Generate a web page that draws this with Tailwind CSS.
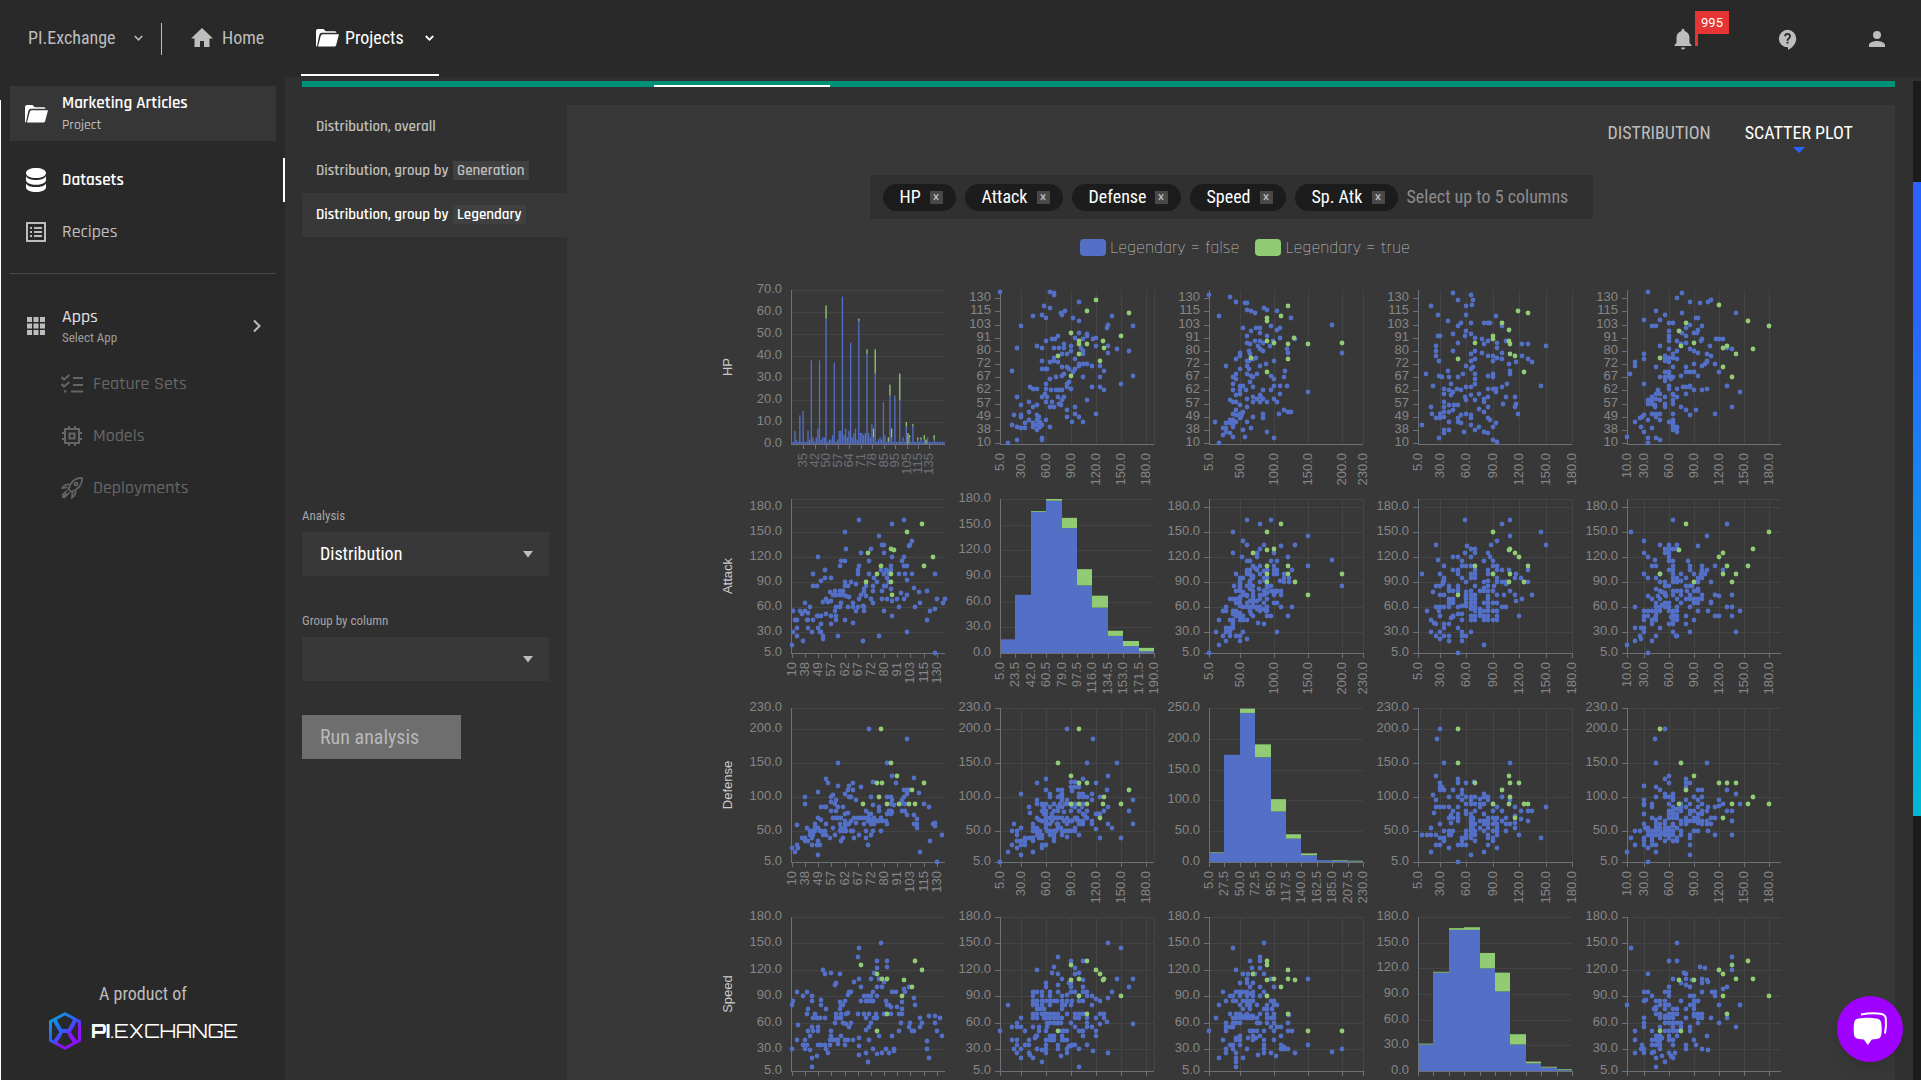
<!doctype html>
<html lang="en">

<head>
    <meta charset="utf-8">
    <meta name="viewport" content="width=device-width, initial-scale=1">
    <script src="https://cdn.jsdelivr.net/npm/@tailwindcss/browser@4"></script>
    <title>PI.Exchange - Marketing Articles</title>
</head>

<body class="bg-[#292929] text-[#bdbdbd] font-['Roboto_Condensed','Liberation_Sans_Narrow',Roboto,sans-serif] h-screen flex overflow-hidden">
    <div class="w-px shrink-0 pt-[100px]">
        <div class="h-full bg-white"></div>
    </div>

    <div class="flex-1 min-w-0 flex flex-col">
        <!-- Top bar -->
        <header class="h-[77px] shrink-0 flex items-stretch pl-[27px] text-lg">
            <button class="flex items-center gap-5 pb-px">
                <span class="w-[86px] text-left">PI.Exchange</span>
                <svg class="w-[9px] h-2" viewBox="0 0 9 8" fill="none" stroke="currentColor" stroke-width="1.6"><path d="M.8 2l3.7 3.8L8.2 2" /></svg>
            </button>
            <span class="w-px h-8 my-auto ml-[18px] bg-[#bdbdbd]"></span>
            <a href="#" class="flex items-center gap-2 ml-7 pb-px">
                <svg class="w-6 h-6" viewBox="0 0 24 24" fill="currentColor"><path d="M10 21v-6h4v6h5.500v-8.500H23L12 2 1 12.500h3.500V21z" /></svg>
                <span class="w-[42px]">Home</span>
            </a>
            <a href="#" class="flex items-center gap-[6px] ml-[37px] w-[138px] pl-[14px] pt-[2px] mb-px border-b-2 border-white text-white">
                <svg class="w-6 h-6 shrink-0" viewBox="0 0 24 24" fill="currentColor"><path d="M2 20.500a1 1 0 0 1-1-1V5a2 2 0 0 1 2-2h5.500l2.200 2.200H20a1.500 1.500 0 0 1 1.500 1.600H7a3 3 0 0 0-2.700 2.100L2.300 18.500zM5.800 9.800A2 2 0 0 1 7.700 8.300H24l-2.900 10.900a1.800 1.800 0 0 1-1.700 1.300H3z" /></svg>
                <span class="w-[60px]">Projects</span>
                <svg class="w-[9px] h-2 ml-[14px] shrink-0" viewBox="0 0 9 8" fill="none" stroke="currentColor" stroke-width="1.8"><path d="M.8 2l3.700 3.800L8.200 2" /></svg>
            </a>
            <div class="ml-auto flex items-center pr-8 gap-[66px]">
                <button class="relative" aria-label="Notifications">
                    <svg class="w-6 h-6" viewBox="0 0 24 24" fill="currentColor"><path d="M12 22.500a2 2 0 0 0 2-2h-4a2 2 0 0 0 2 2zM18.500 16v-5.500c0-3.200-1.900-5.800-5-6.600V3.200a1.500 1.500 0 0 0-3 0v.7c-3.100.8-5 3.400-5 6.600V16l-2 2v1h17v-1z" /></svg>
                    <span class="absolute left-6 -top-4 w-[34px] h-[23px] bg-[#e53535] text-white text-[13px] leading-[23px] text-center font-['Roboto',sans-serif]">995</span>
                    <span class="absolute left-6 top-1 w-[3px] h-[15px] bg-[#e53535]"></span>
                </button>
                <button class="ml-4" aria-label="Help">
                    <svg class="w-[22px] h-[22px]" viewBox="0 0 24 24" fill="currentColor"><path d="M11.500 2a9.500 9.500 0 0 0 0 19h.5v3c4.900-2.300 9-7.200 9-12.500A9.500 9.500 0 0 0 11.500 2zm1 15h-2v-2h2zm.4-4.200c-.3.300-.4.600-.4 1.200h-2c0-1.600.6-2.300 1.300-2.900.8-.7 1.400-1.100 1.400-2a1.700 1.700 0 0 0-3.400 0h-2a3.700 3.700 0 0 1 7.400 0c0 1.800-1.400 2.600-2.300 3.700z" /></svg>
                </button>
                <button aria-label="Account">
                    <svg class="w-6 h-6" viewBox="0 0 24 24" fill="currentColor"><path d="M12 12a4 4 0 1 0 0-8 4 4 0 0 0 0 8zm0 2c-2.700 0-8 1.300-8 4v2h16v-2c0-2.700-5.300-4-8-4z" /></svg>
                </button>
            </div>
        </header>

        <div class="flex-1 min-h-0 flex">
            <!-- Sidebar -->
            <aside class="w-[284px] shrink-0 flex flex-col pt-[9px] font-['Rajdhani',Roboto,sans-serif] text-lg">
                <a href="#" class="mx-[9px] h-[55px] flex items-center gap-[14px] pl-[14px] bg-[#363636]">
                    <svg class="w-6 h-6 text-white" viewBox="0 0 24 24" fill="currentColor"><path d="M2 20.500a1 1 0 0 1-1-1V5a2 2 0 0 1 2-2h5.500l2.200 2.200H20a1.500 1.500 0 0 1 1.500 1.600H7a3 3 0 0 0-2.700 2.100L2.300 18.500zM5.800 9.800A2 2 0 0 1 7.700 8.300H24l-2.900 10.900a1.800 1.800 0 0 1-1.700 1.300H3z" /></svg>
                    <span class="pb-[2px]">
                        <span class="block text-[17px] leading-6 font-semibold text-white">Marketing Articles</span>
                        <span class="block text-sm leading-5 font-medium">Project</span>
                    </span>
                </a>
                <nav class="pt-[17px]">
                    <a href="#" class="h-11 flex items-center gap-[14px] pl-[23px] border-r-2 border-white text-[17px] font-semibold text-white">
                        <svg class="w-6 h-6" viewBox="0 0 24 24" fill="currentColor"><path d="M12 0C6.500 0 2 2 2 5s4.500 5 10 5 10-2 10-5-4.500-5-10-5zM2 8v4c0 2.800 4.500 4.800 10 4.800s10-2 10-4.800V8c-1.200 2.600-5 4-10 4S3.200 10.600 2 8zm0 7.400v3.800C2 22 6.500 24 12 24s10-2 10-4.800v-3.800c-1.200 2.400-5 3.600-10 3.600S3.200 17.800 2 15.400z" /></svg>
                        Datasets
                    </a>
                    <a href="#" class="h-11 mt-2 flex items-center gap-[14px] pl-[23px] font-medium">
                        <svg class="w-6 h-6" viewBox="0 0 24 24" fill="none" stroke="currentColor" stroke-width="2"><path d="M3 3h18v18H3zM6 8h2m-2 4h2m-2 4h2m2-8h8m-8 4h8m-8 4h8" /></svg>
                        Recipes
                    </a>
                </nav>
                <hr class="mx-[9px] mt-[19px] border-[#484848]">
                <button class="mt-[31px] flex items-center gap-[14px] pl-[23px] pr-[22px] text-left">
                    <svg class="w-6 h-6" viewBox="0 0 24 24" fill="currentColor"><path d="M3 3h5v5H3zm6.500 0h5v5h-5zM16 3h5v5h-5zM3 9.500h5v5H3zm6.500 0h5v5h-5zm6.500 0h5v5h-5zM3 16h5v5H3zm6.500 0h5v5h-5zm6.500 0h5v5h-5z" /></svg>
                    <span>
                        <span class="block leading-6 font-medium text-[#e0e0e0]">Apps</span>
                        <span class="block text-[13px] leading-[18px] text-[#9e9e9e] font-['Roboto_Condensed','Liberation_Sans_Narrow',Roboto,sans-serif]">Select App</span>
                    </span>
                    <svg class="w-3 h-4 ml-auto" viewBox="0 0 12 16" fill="none" stroke="currentColor" stroke-width="2"><path d="M3 2.500L8.500 8 3 13.500" /></svg>
                </button>
                <div class="mt-[11px] pl-[60px] text-[#666] font-medium">
                    <a href="#" class="h-[52px] flex items-center gap-[10px]">
                        <svg class="w-[22px] h-[22px]" viewBox="0 0 22 22" fill="none" stroke="currentColor" stroke-width="2"><path d="M.5 4l2.500 2.500L8.500 2M.5 11L3 13.500 8.500 9M12 5h10m-10 7h10m-12 6.500h12M3 18.500h2.500" /></svg>
                        Feature Sets
                    </a>
                    <a href="#" class="h-[52px] flex items-center gap-[10px]">
                        <svg class="w-[22px] h-[22px]" viewBox="0 0 22 22" fill="none" stroke="currentColor" stroke-width="2"><path d="M4 4h14v14H4zM8.500 8.500h5v5h-5zM8 1v3m6-3v3M8 18v3m6-3v3M1 8h3m-3 6h3M18 8h3m-3 6h3" /></svg>
                        Models
                    </a>
                    <a href="#" class="h-[52px] flex items-center gap-[10px]">
                        <svg class="w-[22px] h-[22px]" viewBox="0 0 22 22" fill="none" stroke="currentColor" stroke-width="1.700"><path d="M21 1c-6-.5-11 3.500-13.500 11l3 3C17.500 12 21.500 7 21 1zM8 7L3.500 8.500 1.500 11l5-.5M15 14l-1.500 4.500-2.500 2 .5-5M6 13.500l-5 5M8.500 15.500l-5.500 5.500M5.500 16.500L1 21" /><circle cx="15" cy="7" r="1.500" /></svg>
                        Deployments
                    </a>
                </div>
                <div class="mt-auto pb-[30px] text-center">
                    <p class="leading-6 font-['Roboto_Condensed','Liberation_Sans_Narrow',Roboto,sans-serif]">A product of</p>
                    <div class="mt-[6px] flex justify-center items-center gap-[9px]">
                        <svg class="w-[34px] h-[38px]" viewBox="0 0 34 38" fill="none">
                            <defs>
                                <linearGradient id="brand" x1="0" y1="0" x2="34" y2="38" gradientUnits="userSpaceOnUse">
                                    <stop offset="0" stop-color="#00b4c8" />
                                    <stop offset=".45" stop-color="#2962ff" />
                                    <stop offset=".65" stop-color="#9012ff" />
                                    <stop offset="1" stop-color="#8a10ff" />
                                </linearGradient>
                            </defs>
                            <path d="M17 1.800L31.500 9.500v19L17 36.200 2.500 28.500v-19z" stroke="url(#brand)" stroke-width="3" stroke-linejoin="round" />
                            <path d="M7 8c2 6 5 9 6 11s-3 6-6 11M27 8c-2 6-5 9-6 11s3 6 6 11M13 19h8" stroke="url(#brand)" stroke-width="4" />
                        </svg>
                        <span class="text-[19px] leading-6 font-normal text-white font-['Orbitron','Inter',sans-serif]"><b class="font-extrabold">PI</b>.EXCHANGE</span>
                    </div>
                </div>
            </aside>

            <main class="flex-1 min-w-0 bg-[#303030] flex pt-1">
                <div class="flex-1 min-w-0 ml-[17px] mr-[18px] flex flex-col">
                    <div class="h-[6px] shrink-0 bg-[#009078] flex items-end pl-[352px]">
                        <span class="w-44 h-0.5 bg-white"></span>
                    </div>
                    <div class="mt-[18px] flex-1 min-h-0 flex">
                        <!-- Analysis list -->
                        <section class="w-[265px] shrink-0 flex flex-col font-['Rajdhani',Roboto,sans-serif] text-[15px] font-semibold">
                            <button class="h-11 px-[14px] text-left">Distribution, overall</button>
                            <button class="h-11 px-[14px] text-left">Distribution, group by <span class="ml-px px-1 bg-[#404040]">Generation</span></button>
                            <button class="h-11 px-[14px] text-left bg-[#383838] text-white">Distribution, group by <span class="ml-px px-1 bg-[#404040]">Legendary</span></button>

                            <form class="mt-[269px] w-[247px] font-['Roboto_Condensed','Liberation_Sans_Narrow',Roboto,sans-serif] font-normal">
                                <label for="analysis" class="block text-[13px] leading-5 text-[#a5a5a5]">Analysis</label>
                                <div class="relative mt-[6px]">
                                    <select id="analysis" class="appearance-none w-full h-11 pl-[18px] bg-[#383838] text-white text-lg">
                                        <option>Distribution</option>
                                    </select>
                                    <svg class="absolute right-4 top-[18px] w-[10px] h-2" viewBox="0 0 10 8" fill="#bdbdbd"><path d="M0 1h10L5 7.500z" /></svg>
                                </div>
                                <label for="group" class="block mt-[35px] text-[13px] leading-5 text-[#a5a5a5]">Group by column</label>
                                <div class="relative mt-[6px]">
                                    <select id="group" class="appearance-none w-full h-11 pl-[18px] bg-[#383838] text-white text-lg">
                                        <option></option>
                                    </select>
                                    <svg class="absolute right-4 top-[18px] w-[10px] h-2" viewBox="0 0 10 8" fill="#bdbdbd"><path d="M0 1h10L5 7.500z" /></svg>
                                </div>
                                <button type="button" class="mt-[34px] w-[159px] h-11 pl-[18px] text-left text-xl bg-[#6e6e6e] text-[#b8b8b8]">Run analysis</button>
                            </form>
                        </section>

                        <!-- Scatter matrix -->
                        <section class="flex-1 min-w-0 bg-[#383838] flex flex-col overflow-hidden">
                            <div class="flex justify-end gap-[34px] pt-4 pr-[42px] text-lg leading-6 shrink-0">
                                <button>DISTRIBUTION</button>
                                <button class="relative text-white">SCATTER PLOT
                                    <svg class="absolute left-1/2 -translate-x-1/2 top-[26px] w-3 h-[6px]" viewBox="0 0 12 6" fill="#2962ff"><path d="M0 0h12L6 6z" /></svg>
                                </button>
                            </div>
                            <div class="mt-[30px] mx-auto w-[723px] h-11 shrink-0 flex items-center gap-[9px] pl-[13px] bg-[#303030] text-lg text-white">
                                <span class="h-[27px] pl-[17px] pr-[13px] flex items-center justify-between w-[73px] rounded-full bg-[#1c1c1c]">HP <button aria-label="Remove HP" class="w-[13px] h-[13px] bg-[#484848] text-[#bdbdbd] text-sm leading-[13px]">×</button></span>
                                <span class="h-[27px] pl-[17px] pr-[13px] flex items-center justify-between w-[98px] rounded-full bg-[#1c1c1c]">Attack <button aria-label="Remove Attack" class="w-[13px] h-[13px] bg-[#484848] text-[#bdbdbd] text-sm leading-[13px]">×</button></span>
                                <span class="h-[27px] pl-[17px] pr-[13px] flex items-center justify-between w-[109px] rounded-full bg-[#1c1c1c]">Defense <button aria-label="Remove Defense" class="w-[13px] h-[13px] bg-[#484848] text-[#bdbdbd] text-sm leading-[13px]">×</button></span>
                                <span class="h-[27px] pl-[17px] pr-[13px] flex items-center justify-between w-24 rounded-full bg-[#1c1c1c]">Speed <button aria-label="Remove Speed" class="w-[13px] h-[13px] bg-[#484848] text-[#bdbdbd] text-sm leading-[13px]">×</button></span>
                                <span class="h-[27px] pl-[17px] pr-[13px] flex items-center justify-between w-[103px] rounded-full bg-[#1c1c1c]">Sp. Atk <button aria-label="Remove Sp. Atk" class="w-[13px] h-[13px] bg-[#484848] text-[#bdbdbd] text-sm leading-[13px]">×</button></span>
                                <input type="text" aria-label="Columns" placeholder="Select up to 5 columns" class="flex-1 min-w-0 bg-transparent outline-none placeholder:text-[#8c8c8c]">
                            </div>
                            <div class="mt-[17px] pl-7 h-[23px] shrink-0 flex justify-center items-center text-lg font-light font-['Rajdhani',Roboto,sans-serif]">
                                <span class="w-[26px] h-[17px] mr-1 rounded bg-[#5470c6]"></span>Legendary = false
                                <span class="w-[26px] h-[17px] ml-4 mr-1 rounded bg-[#91cc75]"></span>Legendary = true
                            </div>
                            <svg id="matrix" class="mt-[11px] mx-auto w-[1100px] h-[810px] shrink-0 font-['Liberation_Sans',sans-serif] text-[13px]"></svg>
                        </section>
                    </div>
                </div>
                <div class="w-2 shrink-0 bg-[#1b1b1b] pt-[101px]">
                    <div class="h-[634px] bg-linear-to-b from-[#2962ff] from-20% to-[#00b8d4]"></div>
                </div>
            </main>
        </div>
    </div>

    <button aria-label="Open chat" class="fixed right-[18px] bottom-[18px] w-[66px] h-[66px] rounded-full bg-[#a000ff] shadow-lg flex items-center justify-center">
        <svg class="w-9 h-9" viewBox="0 0 36 36" fill="none"><path d="M9 3.500c8-1.500 15-1.500 20.500-.5 3 .6 4 2 4.300 4.500.5 5 .2 10-.8 15" stroke="#fff" stroke-width="2" /><path d="M6.500 7.500c6-1 12-1 18 0 3 .5 4.500 2 4.800 5 .5 4 .5 8 0 11-.3 2.800-1.800 4.300-4.500 4.500l-5 .5-4 5.500-4-5.500-5-.5c-3-.2-4.500-2-4.800-4.500-.5-4-.5-7 0-11 .3-3 1.500-4.500 4.500-5z" fill="#fff" /></svg>
    </button>

    <script>
        const SIZE = 154;
        const PITCH = 209;
        const LEFT = 110;
        const TOP = 20;
        const ROWS = 4;
        const BLUE = '#5470c6';
        const GREEN = '#91cc75';

        const hpLabels = ['10', '38', '49', '57', '62', '67', '72', '80', '91', '103', '115', '130'];

        // HP is a category axis: its values are ranks, one label every 8 ranks
        const columns = [
            { name: 'HP', min: -0.5, max: 93, ticks: hpLabels.map((_, i) => i * 8), labels: hpLabels },
            { name: 'Attack', min: 5, max: 190, ticks: [5, 30, 60, 90, 120, 150, 180], end: true },
            { name: 'Defense', min: 5, max: 230, ticks: [5, 50, 100, 150, 200, 230] },
            { name: 'Speed', min: 5, max: 180, ticks: [5, 30, 60, 90, 120, 150, 180] },
            { name: 'Sp. Atk', min: 10, max: 194, ticks: [10, 30, 60, 90, 120, 150, 180] },
        ];

        const histograms = [
            null,
            { max: 180, step: 30, from: 5, width: 18.5, blue: [16, 68, 165, 178, 146, 79, 53, 20, 8, 2], green: [0, 0, 1, 2, 12, 19, 14, 6, 6, 4] },
            { max: 250, step: 50, from: 5, width: 22.5, blue: [15, 174, 242, 170, 82, 38, 11, 3, 2, 1], green: [1, 0, 7, 21, 20, 7, 3, 0, 1, 1] },
            { max: 180, step: 30, from: 5, width: 17.5, blue: [31, 115, 165, 165, 120, 93, 31, 9, 4, 1], green: [1, 1, 2, 3, 18, 22, 12, 2, 1, 1] },
        ];

        // rank: [false count, true count]; every other rank has a single row
        const hpCounts = {
            2: [6, 0], 3: [2, 0], 5: [13, 0], 7: [15, 0], 10: [6, 0], 11: [2, 0], 12: [38, 0], 13: [3, 0], 15: [3, 0], 16: [7, 0], 17: [38, 0],
            18: [2, 0], 19: [3, 0], 20: [3, 0], 21: [57, 6], 23: [2, 0], 24: [2, 0], 25: [4, 0], 26: [37, 0], 28: [2, 0], 29: [6, 0], 30: [6, 0],
            31: [67, 0], 32: [4, 0], 33: [7, 0], 34: [3, 0], 35: [6, 0], 36: [46, 0], 37: [3, 0], 38: [5, 0], 39: [7, 0], 40: [2, 0], 41: [56, 1],
            42: [5, 0], 43: [5, 0], 44: [4, 0], 45: [5, 0], 46: [41, 2], 47: [5, 0], 48: [3, 0], 49: [9, 0], 50: [3, 4], 51: [32, 11], 53: [2, 0],
            54: [3, 0], 55: [2, 0], 56: [19, 0], 57: [4, 0], 59: [1, 2], 60: [22, 5], 61: [3, 4], 63: [22, 0], 66: [20, 12], 68: [3, 0], 70: [8, 2],
            71: [0, 5], 72: [3, 1], 74: [8, 1], 77: [2, 1], 79: [2, 1], 81: [2, 2], 82: [0, 2], 83: [3, 0], 87: [2, 2],
        };

        // key: row and column of the plot. Above the diagonal a pair is y,x, below it x,y; [false, true]
        const samples = {
            '01': ['92,5 92,65 91,70 90,70 86,100 83,58 82,65 79,78 80,83 78,80 77,45 78,55 76,60 76,93 74,100 77,140 72,135 70,134 71,30 71,165 67,100 66,110 65,110 64,95 63,105 64,120 63,117 65,75 63,68 63,71 62,60 60,82 59,50 58,56 58,25 58,70 58,76 58,82 59,90 56,90 58,102 56,105 54,105 59,120 59,135 55,135 57,145 56,160 54,85 54,80 52,70 51,95 50,55 49,65 50,70 49,75 48,100 48,105 48,110 47,115 47,100 47,125 46,80 46,85 45,88 45,95 43,93 44,130 44,20 45,55 45,60 45,62 39,65 40,72 41,80 42,82 40,105 40,125 41,165 36,150 34,115 34,125 32,130 36,60 33,60 32,66 32,72 32,76 32,80 34,85 36,85 37,88 33,90 34,41 33,45 33,50 28,25 25,40 28,55 30,59 28,62 25,60 22,65 22,70 25,67 28,75 28,82 26,80 24,76 23,78 26,110 22,95 20,85 16,85 18,95 16,100 13,92 13,105 18,120 23,30 22,45 23,50 19,40 17,22 17,30 16,30 14,40 12,35 17,50 16,52 14,50 13,53 11,20 10,25 9,30 9,35 12,45 10,45 11,50 8,50 11,55 10,53 14,60 10,65 3,55 2,55 2,25 0,15',
                '87,120 80,110 79,160 65,150 67,90 62,100 60,100 60,110 62,129 58,130 53,75 54,100 50,125 41,90'],
            '02': ['90,5 89,35 86,45 85,60 85,58 82,85 81,90 81,60 80,67 79,72 80,105 76,125 77,20 72,184 70,54 70,74 70,79 71,95 69,105 70,109 68,66 67,79 65,60 65,90 64,109 63,130 62,72 61,60 60,65 62,79 61,84 59,76 59,94 62,99 57,119 55,121 55,200 56,84 57,79 56,64 55,50 53,50 51,45 47,30 54,65 51,70 52,74 50,60 50,64 47,60 45,50 45,64 47,79 48,88 50,100 42,75 40,70 41,67 37,65 42,60 42,45 40,40 39,45 41,95 39,100 44,116 40,115 36,40 35,50 35,55 32,40 32,50 32,59 34,69 32,84 32,95 35,100 35,109 35,119 31,150 29,45 30,50 27,60 28,70 29,79 27,75 25,70 25,79 27,84 28,81 25,90 27,100 30,109 25,104 26,35 25,40 25,45 23,50 22,60 20,45 19,54 18,50 18,40 17,45 15,50 16,52 18,53 16,69 18,84 15,84 18,107 20,114 19,120 19,125 13,14 14,35 12,30 13,40 13,45 11,40 12,35 14,40 13,60 9,25 9,30 10,40 5,25 7,30 6,35 8,54 9,66 7,90 4,40 4,58 3,100 0,19',
                '83,120 77,110 76,90 74,90 64,129 62,90 61,100 60,120 60,150 61,200 51,120 43,90 52,67'],
            '03': ['91,45 90,65 87,50 87,67 83,20 83,60 84,66 78,28 78,60 77,94 74,39 73,54 71,50 73,65 73,80 73,84 73,87 71,100 68,60 66,45 65,28 65,30 65,58 66,65 64,70 63,78 62,84 60,80 61,50 59,25 56,25 53,25 50,29 56,45 56,70 54,65 55,78 61,95 58,95 62,105 60,123 60,130 59,150 53,85 53,90 52,95 55,100 51,100 50,90 48,108 49,116 53,123 51,130 49,135 51,70 50,65 47,60 46,68 45,65 44,39 42,14 41,29 40,32 40,40 40,51 42,56 42,70 39,70 41,84 42,90 40,90 44,110 42,110 36,106 35,145 35,22 36,42 33,35 32,40 31,45 33,49 32,54 34,60 34,65 36,70 33,84 33,90 33,94 31,94 34,100 30,35 29,42 28,58 26,60 29,65 26,70 30,74 27,80 28,84 25,80 28,105 28,115 24,102 24,116 22,115 22,20 25,35 23,40 23,46 23,50 22,35 19,35 19,40 20,45 18,21 18,30 15,25 15,30 16,35 17,54 15,50 18,60 17,65 15,65 21,74 19,80 22,84 15,85 14,87 18,119 11,9 13,40 13,50 12,54 11,65 10,74 12,94 10,90 8,70 8,35 8,40 6,35 7,57 7,80 6,85 3,29 2,90 1,95',
                '80,119 79,130 73,100 69,108 65,90 63,90 61,70 62,108 60,110 51,50 54,110 53,115 43,125'],
            '10': ['0,15 87,5 1,30 1,55 2,45 3,45 3,35 3,25 5,55 7,20 8,65 6,52 8,55 9,45 10,35 10,53 10,45 11,60 12,30 13,100 13,45 13,85 15,85 15,50 16,35 16,120 16,50 17,30 18,92 18,40 18,50 18,30 19,25 19,22 20,95 20,105 19,66 21,70 21,52 22,66 23,78 24,40 24,95 24,67 25,75 26,80 26,55 24,50 27,75 27,60 27,45 27,50 28,25 29,110 29,80 29,60 29,75 30,115 30,65 32,115 31,75 31,80 32,150 32,90 32,85 32,45 33,130 33,73 34,60 34,85 35,72 36,90 37,41 37,65 37,60 39,88 40,105 40,60 39,55 40,100 41,110 41,70 42,125 41,165 42,75 43,20 43,62 44,55 44,82 45,85 45,73 44,60 44,78 47,100 47,115 48,130 49,85 49,80 48,70 49,65 50,95 52,90 53,25 53,145 54,105 55,135 56,135 55,80 55,70 56,125 56,56 56,85 56,100 57,105 57,85 58,70 58,95 58,103 59,100 59,90 60,82 60,110 60,105 61,160 61,120 61,68 61,50 64,70 65,100 65,60 66,77 68,120 67,115 68,110 68,165 68,70 69,100 70,93 70,110 70,75 70,30 71,134 72,135 73,140 73,100 74,83 75,60 77,78 78,65 82,45 82,80 84,55 87,100 87,58 88,70 92,65 93,70',
                '70,150 79,160 86,120 80,110 60,130 62,129 46,125 54,110 52,100 45,90 60,100 60,90 61,75'],
            '20': ['0,25 2,20 3,30 4,25 3,59 6,40 8,40 8,100 8,90 9,55 8,35 10,35 11,45 12,40 12,30 11,50 13,50 13,45 14,60 14,55 14,50 15,30 16,35 16,15 17,30 16,108 16,70 16,55 17,50 18,66 18,85 18,50 20,85 19,45 20,50 21,60 21,85 21,126 21,45 22,120 23,40 24,100 24,92 24,80 25,55 25,103 25,70 26,45 26,90 27,95 27,80 28,150 28,116 28,85 27,70 28,70 29,50 29,60 30,35 31,40 31,85 30,70 30,55 31,50 32,105 32,75 32,60 32,55 32,65 33,50 34,76 34,110 34,60 35,116 35,100 35,60 36,50 36,65 37,120 37,110 36,100 38,40 37,50 38,70 39,62 39,95 40,70 41,45 42,115 42,70 44,70 44,60 45,80 45,50 45,40 46,70 46,30 46,65 47,200 47,70 47,75 48,75 48,65 48,45 48,100 48,60 49,122 49,50 49,88 50,60 50,70 50,65 52,65 53,80 53,85 54,50 53,65 54,70 55,65 57,65 58,60 58,75 58,100 58,150 59,80 60,75 60,100 60,90 60,80 61,95 61,130 62,88 61,78 63,120 66,90 67,80 67,95 68,100 68,110 70,110 69,80 70,185 70,105 70,73 71,110 69,90 74,127 74,73 74,60 76,60 76,68 76,55 77,106 78,20 80,90 83,85 84,35 86,60 87,58 87,62 88,5 91,45',
                '43,90 52,120 54,200 53,100 55,120 58,90 60,150 64,130 65,90 71,90 73,110 75,90 80,120'],
            '30': ['0,80 0,30 1,85 3,95 3,40 4,57 7,90 7,35 8,40 8,30 9,95 9,35 9,70 10,75 10,50 11,45 11,29 12,10 12,90 12,85 12,55 12,20 13,50 13,65 14,70 15,65 15,22 16,50 16,35 16,55 17,65 18,80 18,86 18,35 19,120 20,115 20,65 20,35 21,30 21,75 22,25 23,35 23,40 24,50 24,116 24,45 25,40 26,60 26,103 27,105 27,70 27,65 28,65 28,36 29,83 29,115 29,75 27,40 28,40 30,45 30,65 31,60 31,80 30,70 30,80 32,35 32,40 32,85 33,58 33,70 34,91 34,71 35,55 36,95 35,95 36,60 34,40 37,40 38,106 40,135 41,145 41,110 41,33 41,43 42,100 42,85 41,23 40,70 44,90 44,70 45,65 45,52 45,25 45,85 46,85 46,15 46,90 47,70 47,55 47,40 48,110 48,60 48,85 48,90 49,95 49,85 49,30 50,65 50,116 51,65 52,130 52,122 52,100 52,90 51,70 52,65 52,24 53,110 53,45 54,150 55,25 55,100 56,70 56,106 57,85 57,30 58,130 58,123 59,80 59,25 58,80 60,78 60,70 61,45 61,95 62,28 62,30 63,95 64,78 65,70 65,50 66,60 67,70 67,76 67,83 68,98 69,95 71,100 72,60 71,55 73,50 74,50 74,88 75,80 78,65 78,55 79,60 82,39 82,30 83,20 83,67 87,60 87,68 88,50 90,65 91,45',
                '42,125 52,115 55,110 58,110 68,108 75,130 79,120 73,100 67,90 58,70 52,50'],
            '04': ['92,35 91,76 88,70 86,85 85,97 86,107 87,110 79,140 80,45 79,76 78,55 75,50 75,30 76,93 76,95 71,40 71,45 73,60 73,65 72,85 71,100 68,60 70,80 69,95 67,90 67,94 67,76 65,80 65,60 64,60 62,60 62,70 63,100 62,98 63,116 63,120 63,125 59,50 60,74 61,81 59,109 57,135 58,130 57,60 56,70 57,85 56,90 54,30 51,30 49,20 47,20 42,14 53,55 52,60 54,65 51,55 49,60 52,65 51,70 50,55 55,95 54,105 53,110 50,105 49,105 48,115 48,103 47,100 48,90 46,80 43,120 46,45 46,65 43,55 43,60 42,60 41,75 43,80 43,85 43,90 41,95 36,30 40,50 40,55 40,60 40,65 38,55 39,62 35,130 31,145 22,135 18,115 35,60 33,60 33,70 34,77 35,85 34,80 34,85 32,90 32,100 33,105 30,80 32,47 31,47 30,50 30,45 28,55 29,65 30,65 28,70 26,35 28,40 27,45 24,40 26,40 23,44 22,44 24,35 25,35 26,50 24,55 24,65 26,65 22,55 22,75 20,80 17,85 20,92 18,40 18,45 18,50 16,45 18,65 17,30 15,25 16,28 13,20 10,27 7,30 14,35 14,50 14,65 9,40 13,60 11,65 13,65 12,65 10,65 10,70 9,70 7,70 8,65 4,10 3,35 0,35 3,45 2,50',
                '84,120 73,80 68,72 74,154 71,180 57,160 54,140 58,125 59,130 61,90 59,75 52,50 46,125 40,135'],
            '12': ['5,5 15,20 20,50 20,30 22,60 25,50 25,45 25,25 25,35 30,105 30,55 30,35 30,30 30,15 35,40 35,30 35,35 40,85 41,77 40,40 45,60 45,55 45,50 45,40 45,35 45,20 43,40 48,50 50,120 50,95 50,90 50,70 50,50 50,45 50,55 52,40 52,67 55,88 55,80 55,65 55,45 55,40 55,25 55,30 53,45 53,50 55,90 58,85 58,75 60,126 60,110 60,90 60,80 60,75 60,70 60,65 60,30 60,60 60,55 62,50 65,105 65,100 65,85 65,70 65,60 65,50 65,45 67,65 67,75 70,90 70,80 70,70 70,50 70,45 70,40 70,35 72,70 72,50 75,110 75,100 75,85 75,80 75,70 75,60 75,55 73,60 77,90 78,103 80,110 80,105 80,100 80,95 80,85 80,70 80,50 80,45 78,55 82,78 83,90 83,50 85,200 85,95 85,90 85,70 85,60 85,50 85,42 82,65 88,65 90,122 90,115 90,80 90,65 90,50 88,50 92,65 92,87 95,122 95,115 95,85 95,90 95,70 95,55 95,50 92,109 97,70 98,66 100,115 100,105 100,100 100,65 100,60 100,45 100,80 102,60 105,126 105,105 105,100 105,90 105,75 105,65 105,60 103,85 107,72 110,150 110,100 110,80 110,70 115,105 115,95 115,65 115,60 117,184 120,120 120,75 120,53 125,100 125,75 125,40 123,75 130,80 134,110 135,130 135,85 135,60 140,55 145,150 150,40 160,80 165,95 165,60',
                '100,200 75,150 90,130 100,120 110,120 160,110 130,100 90,90 100,90 110,90 129,90 150,90 125,70'],
            '13': ['5,50 15,80 20,40 20,55 22,30 25,60 25,55 25,40 25,35 25,25 30,65 30,55 30,30 30,20 35,50 35,35 40,40 40,35 40,25 41,23 45,95 45,90 45,85 45,80 45,70 45,65 45,55 45,20 47,42 48,45 50,120 50,95 50,85 50,75 50,65 50,45 50,30 50,70 50,80 52,50 52,55 53,75 55,95 55,90 55,80 55,70 55,85 55,15 55,29 58,70 58,65 58,75 60,105 60,100 60,85 60,70 60,65 60,50 60,40 60,30 60,25 60,35 62,60 65,95 65,90 65,80 65,60 65,45 65,40 65,85 65,65 65,70 62,55 67,116 67,40 68,45 70,123 70,85 70,70 70,60 70,40 70,45 70,65 73,85 72,60 75,135 75,115 75,103 75,95 75,65 75,60 75,35 75,30 75,70 78,22 78,60 80,110 80,90 80,80 80,75 80,65 80,50 80,45 80,40 80,85 82,40 82,50 85,91 85,85 85,70 85,50 85,40 85,30 85,25 83,80 88,105 88,33 90,130 90,105 90,100 90,95 90,80 90,60 90,33 92,85 92,35 95,122 95,115 95,95 95,70 95,55 95,35 95,65 100,116 100,90 100,85 100,70 100,65 100,50 100,30 100,10 103,50 105,130 105,108 105,100 105,85 105,70 105,50 105,45 105,95 110,95 110,90 110,60 110,55 110,35 110,65 115,90 115,80 115,55 117,28 120,87 120,65 120,50 120,45 125,85 125,70 125,58 130,70 130,65 134,61 135,150 135,88 135,25 140,95 145,110 150,145 160,100 165,110 165,58',
                '110,130 90,125 120,120 125,115 130,110 100,110 90,108 129,108 150,90 100,90 110,70 75,50'],
            '14': ['165,65 160,130 150,15 145,105 140,30 135,50 135,60 135,70 134,95 130,55 130,60 130,65 130,70 125,30 125,55 125,60 120,35 120,60 117,44 115,60 115,65 115,83 110,40 110,45 110,65 110,85 110,100 110,115 105,65 105,60 105,85 105,100 105,105 105,125 103,100 100,30 100,50 100,65 100,75 100,90 100,98 100,103 95,35 95,45 95,80 95,95 95,100 95,70 95,65 92,75 90,50 90,70 90,110 90,95 90,65 90,55 85,60 85,55 85,80 85,85 85,88 82,45 82,95 80,50 80,75 80,65 80,90 80,82 80,70 80,95 78,52 77,55 75,55 75,65 75,75 75,85 75,100 75,135 75,115 73,120 73,57 73,47 70,40 70,50 70,70 70,80 70,90 70,95 70,100 70,85 73,35 66,110 65,45 65,55 65,60 65,75 65,90 65,95 65,110 63,52 60,20 60,45 60,50 60,60 60,70 60,85 60,130 60,135 60,55 55,30 55,35 55,40 55,45 55,50 55,60 55,65 55,70 55,95 55,107 55,145 52,65 52,45 50,30 50,35 50,45 50,65 50,70 50,80 50,115 50,120 50,135 45,30 45,40 45,65 45,70 45,90 45,45 40,40 40,60 40,65 40,80 35,20 35,27 35,30 35,50 30,30 30,65 30,85 30,140 25,25 25,45 25,68 25,70 22,27 20,20 20,40 15,10 5,35 47,43 48,62',
                '160,80 150,180 130,160 129,72 125,125 120,120 110,130 110,154 100,50 100,125 100,140 90,90 90,135'],
            '23': ['200,30 185,27 150,35 150,110 130,25 126,50 120,30 120,60 120,50 122,69 115,32 115,30 110,30 110,35 110,45 110,55 105,55 105,80 103,22 100,40 100,50 100,60 100,65 100,70 100,80 100,85 100,100 95,25 95,55 95,65 95,85 95,110 97,75 90,60 90,65 90,75 90,80 90,90 90,70 85,25 85,30 85,35 85,40 85,50 85,95 85,115 85,150 85,75 80,45 80,60 80,70 80,90 80,100 80,122 80,130 80,135 77,23 75,50 75,60 75,65 75,80 73,42 70,40 70,45 70,50 70,65 70,68 70,85 70,95 70,90 70,105 66,67 65,50 65,65 65,75 65,80 65,85 65,100 65,130 67,93 60,30 60,65 60,70 60,80 60,85 60,90 60,95 60,105 60,110 62,43 58,67 55,20 55,65 55,75 55,85 55,95 55,115 52,68 50,35 50,40 50,45 50,60 50,65 50,70 50,80 50,95 50,105 50,90 45,10 45,15 45,20 45,25 45,43 45,60 45,65 45,85 45,95 45,120 45,70 45,40 40,30 40,35 40,55 40,60 40,65 40,85 40,90 40,145 35,35 35,55 35,70 35,90 30,25 30,30 30,50 30,55 30,60 30,85 25,40 25,95 20,20 20,80 15,65 5,50 68,122 72,115 62,115',
                '200,50 150,50 130,108 120,70 120,110 120,120 110,100 100,110 90,90 90,108 90,125 90,130 70,115'],
            '24': ['200,55 184,44 150,45 150,105 130,60 126,55 126,80 120,60 120,80 120,85 116,30 115,45 115,80 110,50 110,95 110,100 110,130 110,80 105,55 105,65 105,140 100,45 100,55 100,60 100,65 100,90 100,100 95,30 95,65 95,80 95,95 95,120 90,30 90,40 90,60 90,75 90,85 90,100 90,125 90,145 88,30 87,120 85,40 85,65 85,75 85,80 85,95 85,107 85,115 82,70 80,60 80,65 80,75 80,85 80,90 80,100 80,105 80,130 80,135 75,30 75,60 75,70 75,85 75,100 75,65 75,95 70,40 70,50 70,60 70,65 70,70 70,80 70,90 70,95 70,115 70,110 67,45 67,90 65,55 65,75 65,85 65,90 65,95 65,100 65,105 65,135 65,80 62,95 60,30 60,50 60,55 60,65 60,75 60,80 60,100 60,110 60,45 60,105 57,65 55,32 55,35 55,45 55,50 55,60 55,70 55,55 50,20 50,25 50,35 50,45 50,50 50,60 50,65 50,75 50,90 50,95 50,107 50,40 50,55 47,52 45,40 45,45 45,50 45,55 45,60 45,65 45,75 45,85 45,115 45,135 45,35 40,15 40,30 40,40 40,50 40,60 40,85 40,70 35,30 35,40 35,55 35,65 35,70 30,20 30,30 30,40 30,45 30,85 25,35 20,10 20,45 15,85 5,35',
                '200,50 150,75 130,90 120,120 120,130 120,140 110,80 100,160 90,72 90,135 90,154 90,180 70,125'],
            '34': ['150,70 145,15 135,135 130,60 130,70 123,97 122,103 120,135 116,78 115,35 115,80 110,65 110,80 110,100 108,88 108,105 106,107 105,100 105,75 103,80 100,60 100,85 100,130 98,125 95,30 95,35 95,55 95,60 95,100 95,115 95,112 90,40 90,60 90,85 90,90 90,115 86,33 85,30 85,45 85,55 85,75 85,90 85,95 85,50 80,10 80,50 80,55 80,85 80,120 80,145 80,60 80,90 78,45 76,42 75,55 75,65 75,80 75,90 75,45 75,70 70,45 70,60 70,65 70,70 70,90 70,95 70,100 70,50 68,55 65,30 65,50 65,55 65,60 65,65 65,80 65,95 65,100 65,110 65,130 67,90 60,30 60,55 60,60 60,65 60,75 60,95 60,70 59,120 55,30 55,50 55,65 55,75 55,85 55,140 50,20 50,40 50,55 50,60 50,65 50,70 50,85 45,45 45,50 45,60 45,70 45,105 42,52 40,20 40,40 40,45 40,50 40,65 40,90 40,60 38,48 35,28 35,40 35,50 35,65 35,80 35,92 35,45 30,27 30,30 30,50 30,80 30,100 29,107 27,42 25,20 25,30 25,40 25,60 25,67 22,52 20,45 20,65 22,62 15,55 10,45',
                '130,155 125,135 120,120 115,125 110,140 110,160 108,72 108,90 90,125 90,180 70,130 50,50 50,75'],
        };

        const svg = document.getElementById('matrix');

        function add(tag, attrs, text) {
            const el = document.createElementNS('http://www.w3.org/2000/svg', tag);
            for (const key in attrs) el.setAttribute(key, attrs[key]);
            if (text !== undefined) el.textContent = text;
            svg.appendChild(el);
            return el;
        }

        function line(x1, y1, x2, y2, stroke) {
            add('line', { x1, y1, x2, y2, stroke, 'shape-rendering': 'crispEdges' });
        }

        function scale(column, value) {
            return Math.round((value - column.min) / (column.max - column.min) * SIZE);
        }

        function yLabel(x, y, text) {
            add('text', { x: x - 9, y: y + 3, 'text-anchor': 'end', fill: '#868686' }, text);
        }

        function xLabel(x, y, text, fill = '#868686') {
            add('text', { transform: `translate(${x + 4} ${y + 9}) rotate(-90)`, 'text-anchor': 'end', fill }, text);
        }

        function axes(x0, y0) {
            line(x0, y0, x0, y0 + SIZE, '#6e7079');
            line(x0, y0 + SIZE, x0 + SIZE, y0 + SIZE, '#6e7079');
        }

        function drawScatter(row, col, x0, y0) {
            const xCol = columns[col];
            const yCol = columns[row];
            const bottom = y0 + SIZE;

            xCol.ticks.forEach((tick, i) => {
                const x = x0 + scale(xCol, tick);
                if (col > 0) line(x, y0, x, bottom, '#444');
                if (row > 0) line(x, bottom, x, bottom + 5, '#6e7079');
                if (row < ROWS - 1) xLabel(x, bottom, xCol.labels ? xCol.labels[i] : tick.toFixed(1));
            });
            if (xCol.end) line(x0 + SIZE, y0, x0 + SIZE, bottom, '#444');

            yCol.ticks.forEach((tick, i) => {
                const y = bottom - scale(yCol, tick);
                if (row > 0) line(x0, y, x0 + SIZE, y, '#444');
                if (col > 0) line(x0 - 5, y, x0, y, '#6e7079');
                yLabel(x0, y, yCol.labels ? yCol.labels[i] : tick.toFixed(1));
            });
            if (yCol.end) line(x0, y0, x0 + SIZE, y0, '#444');
            axes(x0, y0);

            const lists = samples[`${row}${col}`] || samples[`${col}${row}`];
            lists.forEach((list, i) => {
                list.split(' ').forEach(pair => {
                    const [a, b] = pair.split(',').map(Number);
                    const xv = row < col ? b : a;
                    const yv = row < col ? a : b;
                    add('circle', { cx: x0 + scale(xCol, xv), cy: bottom - scale(yCol, yv), r: 2.4, fill: i ? GREEN : BLUE });
                });
            });
        }

        function drawHistogram(col, x0, y0) {
            const { max, step, from, width, blue, green } = histograms[col];
            const bottom = y0 + SIZE;
            for (let v = 0; v <= max; v += step) {
                const y = bottom - Math.round(v / max * SIZE);
                line(x0, y, x0 + SIZE, y, '#444');
                yLabel(x0, y, v.toFixed(1));
            }
            blue.forEach((count, i) => {
                const x = x0 + Math.round(i * SIZE / 10);
                const w = x0 + Math.round((i + 1) * SIZE / 10) - x;
                const h = count / max * SIZE;
                const g = green[i] / max * SIZE;
                add('rect', { x, y: bottom - h, width: w, height: h, fill: BLUE });
                add('rect', { x, y: bottom - h - g, width: w, height: g, fill: GREEN });
            });
            axes(x0, y0);
            for (let i = 0; i <= 10; i++) {
                const x = x0 + Math.round(i * SIZE / 10);
                line(x, bottom, x, bottom + 5, '#6e7079');
                if (col < ROWS - 1) xLabel(x, bottom, (from + i * width).toFixed(1));
            }
        }

        function drawHpHistogram(x0, y0) {
            const bottom = y0 + SIZE;
            const band = SIZE / 94;
            for (let v = 0; v <= 70; v += 10) {
                const y = bottom - v * 2.2;
                line(x0, y, x0 + SIZE, y, '#444');
                yLabel(x0, y, v.toFixed(1));
            }
            for (let i = 0; i < 94; i++) {
                const [b, g] = hpCounts[i] || [1, 0];
                add('rect', { x: x0 + i * band, y: bottom - b * 2.2, width: 1.3, height: b * 2.2, fill: BLUE });
                add('rect', { x: x0 + i * band, y: bottom - (b + g) * 2.2, width: 1.3, height: g * 2.2, fill: GREEN });
            }
            axes(x0, y0);
            ['35', '42', '50', '57', '64', '71', '78', '85', '95', '105', '115', '135'].forEach((text, i) => {
                const x = x0 + Math.round((i * 7 + 7.5) * band);
                line(x, bottom, x, bottom + 5, '#6e7079');
                xLabel(x, bottom, text, '#6e7079');
            });
        }

        for (let row = 0; row < ROWS; row++) {
            const y0 = TOP + row * PITCH;
            add('text', { transform: `translate(51 ${y0 + SIZE / 2}) rotate(-90)`, 'text-anchor': 'middle', fill: '#ccc' }, columns[row].name);
            for (let col = 0; col < 5; col++) {
                const x0 = LEFT + col * PITCH;
                if (row !== col) drawScatter(row, col, x0, y0);
                else if (row === 0) drawHpHistogram(x0, y0);
                else drawHistogram(col, x0, y0);
            }
        }
    </script>
</body>

</html>
